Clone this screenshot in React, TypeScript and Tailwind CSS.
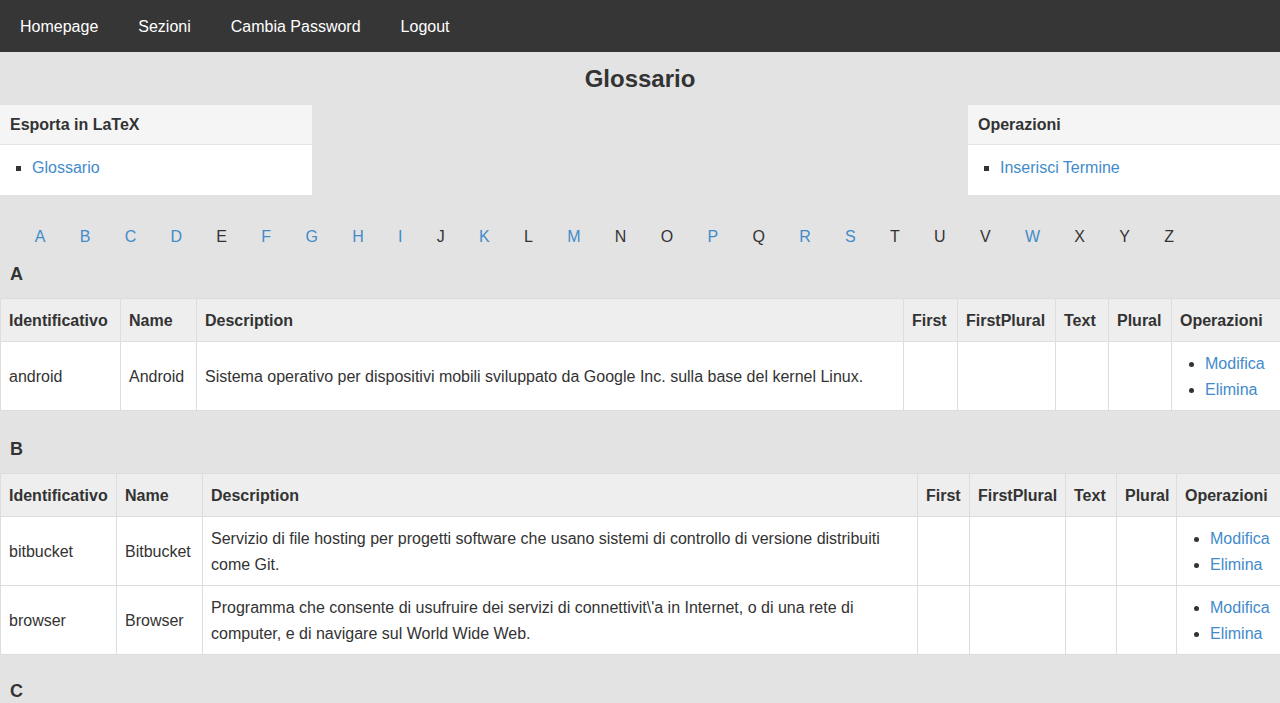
import React from 'react'

type Term = { id: string; name: string; description: string }

const letters = 'ABCDEFGHIJKLMNOPQRSTUVWXYZ'.split('')
const linked = 'ABCDFGHIKMPRSW'

const sections: { letter: string; widths: string[]; terms: Term[] }[] = [
  {
    letter: 'A',
    widths: ['w-[120px]', 'w-[76px]', 'w-[707px]', 'w-[54px]', 'w-[98px]', 'w-[53px]', 'w-[63px]', 'w-[109px]'],
    terms: [
      {
        id: 'android',
        name: 'Android',
        description: 'Sistema operativo per dispositivi mobili sviluppato da Google Inc. sulla base del kernel Linux.',
      },
    ],
  },
  {
    letter: 'B',
    widths: ['w-[116px]', 'w-[86px]', 'w-[715px]', 'w-[52px]', 'w-[96px]', 'w-[51px]', 'w-[60px]', 'w-[104px]'],
    terms: [
      {
        id: 'bitbucket',
        name: 'Bitbucket',
        description:
          'Servizio di file hosting per progetti software che usano sistemi di controllo di versione distribuiti come Git.',
      },
      {
        id: 'browser',
        name: 'Browser',
        description:
          "Programma che consente di usufruire dei servizi di connettivit\\'a in Internet, o di una rete di computer, e di navigare sul World Wide Web.",
      },
    ],
  },
]

const headers = ['Identificativo', 'Name', 'Description', 'First', 'FirstPlural', 'Text', 'Plural', 'Operazioni']

const Panel = ({ title, link }: { title: string; link: string }) => (
  <div className="w-[312px] bg-white">
    <div className="h-[40px] bg-[#f5f5f5] border-b border-[#e6e6e6] px-[10px] pt-[1px] flex items-center font-bold text-[16px]">
      {title}
    </div>
    <ul className="h-[50px] pt-[10px] pl-[32px] list-[square] text-[16px] leading-[26px] marker:text-[#333]">
      <li>
        <a href="#/" className="text-[#428bca]">{link}</a>
      </li>
    </ul>
  </div>
)

const App = () => {
  return (
    <div className="min-h-screen bg-[#e3e3e3] text-[#333] font-['Liberation_Sans',Arial,sans-serif]">
      <nav className="h-[52px] pt-[2px] bg-[#363636] flex items-center text-[16px] text-white">
        <a href="#/" className="px-5">Homepage</a>
        <a href="#/" className="px-5">Sezioni</a>
        <a href="#/" className="px-5">Cambia Password</a>
        <a href="#/" className="px-5">Logout</a>
      </nav>

      <h1 className="mt-[13px] mb-[12px] text-center text-[24px] leading-[28px] font-bold">Glossario</h1>

      <div className="flex justify-between">
        <Panel title="Esporta in LaTeX" link="Glossario" />
        <Panel title="Operazioni" link="Inserisci Termine" />
      </div>

      <div className="mt-[29px] flex gap-[34.3px] pl-[34.7px] text-[16px] leading-[26px]">
        {letters.map((l) =>
          linked.includes(l) ? (
            <a key={l} href="#/" className="text-[#428bca]">{l}</a>
          ) : (
            <span key={l}>{l}</span>
          )
        )}
      </div>

      {sections.map((s, si) => (
        <section key={s.letter} className={si === 0 ? 'mt-[10px]' : 'mt-[24px]'}>
          <h3 className="px-[10px] pt-[1px] text-[18px] leading-[26px] font-bold">{s.letter}</h3>
          <table className="mt-[11px] w-full table-fixed border-collapse text-[16px] leading-[26px]">
            <thead>
              <tr className="bg-[#eeeeee]">
                {headers.map((h, i) => (
                  <th key={h} className={`${s.widths[i]} border border-[#dddddd] px-[8px] pt-[9px] pb-[7px] text-left font-bold whitespace-nowrap`}>
                    {h}
                  </th>
                ))}
              </tr>
            </thead>
            <tbody className="bg-white">
              {s.terms.map((t) => (
                <tr key={t.id}>
                  <td className="border border-[#dddddd] px-[8px] pt-[9px] pb-[7px] align-middle">{t.id}</td>
                  <td className="border border-[#dddddd] px-[8px] pt-[9px] pb-[7px] align-middle">{t.name}</td>
                  <td className="border border-[#dddddd] px-[8px] pt-[9px] pb-[7px] align-middle">{t.description}</td>
                  <td className="border border-[#dddddd]"></td>
                  <td className="border border-[#dddddd]"></td>
                  <td className="border border-[#dddddd]"></td>
                  <td className="border border-[#dddddd]"></td>
                  <td className="border border-[#dddddd] px-[8px] pt-[9px] pb-[7px] align-middle">
                    <ul className="list-disc pl-[25px] marker:text-[#333]">
                      <li><a href="#/" className="text-[#428bca]">Modifica</a></li>
                      <li><a href="#/" className="text-[#428bca]">Elimina</a></li>
                    </ul>
                  </td>
                </tr>
              ))}
            </tbody>
          </table>
        </section>
      ))}

      <section className="mt-[22px] pb-[40px]">
        <h3 className="px-[10px] pt-[1px] text-[18px] leading-[26px] font-bold">C</h3>
      </section>
    </div>
  )
}

export default App
